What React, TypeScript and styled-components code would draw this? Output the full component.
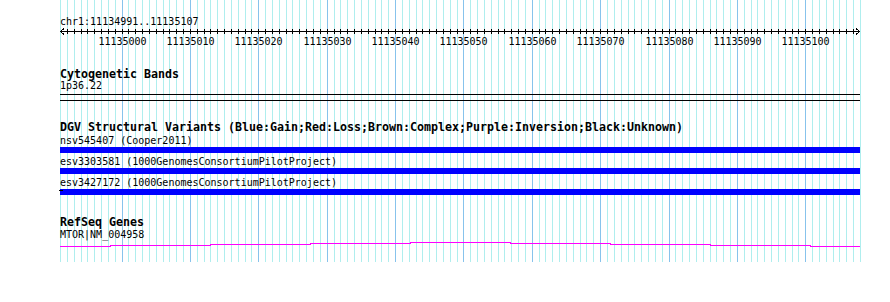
import styled, { createGlobalStyle } from "styled-components";

const START = 11134991;
const END = 11135107;
const SPAN = END - START + 1;
const TRACK_W = 800;
const LEFT = 60;
const bp = TRACK_W / SPAN;
const px = (i: number) => Math.round(i * bp);

const ticks = Array.from({ length: SPAN + 1 }, (_, i) => i);
const majors = ticks.filter((i) => (START + i) % 10 === 0);

const variants = [
  { id: "nsv545407", study: "Cooper2011" },
  { id: "esv3303581", study: "1000GenomesConsortiumPilotProject" },
  { id: "esv3427172", study: "1000GenomesConsortiumPilotProject", mark: true },
];

// exon/intron steps of the gene model: [start px, end px, row]
const geneSteps: [number, number, number][] = [
  [0, 50, 5],
  [50, 150, 4],
  [150, 250, 3],
  [250, 350, 2],
  [350, 450, 1],
  [450, 550, 2],
  [550, 650, 3],
  [650, 750, 4],
  [750, 800, 5],
];

function App() {
  return (
    <Page>
      <GlobalStyle />
      <GridLayer width={890} height={262}>
        {ticks.map((i) => {
          const major = (START + i) % 10 === 0;
          const x = LEFT + px(i) + 0.5;
          return (
            <line
              key={i}
              x1={x}
              x2={x}
              y1={0}
              y2={262}
              stroke={major ? "#87c3ec" : "#afeeee"}
              strokeWidth={1}
            />
          );
        })}
      </GridLayer>

      <Panel>
        <ChrLabel>chr1:11134991..11135107</ChrLabel>
        <RulerSvg width={801} height={20}>
          <line x1={0} x2={800} y1={3.5} y2={3.5} stroke="#000" />
          <polyline points="4,0.5 0.5,3.5 4,6.5" fill="none" stroke="#000" />
          <polyline points="796,0.5 799.5,3.5 796,6.5" fill="none" stroke="#000" />
          {ticks.slice(1, -1).map((i) => (
            <line
              key={i}
              x1={px(i) + 0.5}
              x2={px(i) + 0.5}
              y1={1}
              y2={6}
              stroke="#000"
            />
          ))}
          {majors.map((i) => (
            <TickText key={i} x={px(i) + 0.5} y={17} textAnchor="middle">
              {START + i}
            </TickText>
          ))}
        </RulerSvg>

        <Track $gap={20}>
          <TrackTitle>Cytogenetic Bands</TrackTitle>
          <FeatureLabel>1p36.22</FeatureLabel>
          <BandLines />
        </Track>

        <Track $gap={20}>
          <TrackTitle>
            DGV Structural Variants
            (Blue:Gain;Red:Loss;Brown:Complex;Purple:Inversion;Black:Unknown)
          </TrackTitle>
          <VariantList>
            {variants.map((v) => (
              <FeatureRow key={v.id}>
                <FeatureLabel>
                  {v.id} ({v.study})
                </FeatureLabel>
                <Bar $mark={!!v.mark} />
              </FeatureRow>
            ))}
          </VariantList>
        </Track>

        <Track $gap={21}>
          <TrackTitle>RefSeq Genes</TrackTitle>
          <GeneLabel>MTOR|NM_004958</GeneLabel>
          <GeneSvg width={800} height={8}>
            <polyline
              fill="none"
              stroke="#ff00ff"
              strokeWidth={1}
              points={geneSteps
                .map(([a, b, r]) => `${a},${r + 0.5} ${b},${r + 0.5}`)
                .join(" ")}
            />
          </GeneSvg>
        </Track>
      </Panel>
    </Page>
  );
}

export default App;

const GlobalStyle = createGlobalStyle`
  html, body {
    margin: 0;
    padding: 0;
    background: #ffffff;
    font-family: "DejaVu Sans Mono", "Liberation Mono", monospace;
  }
  * {
    box-sizing: border-box;
  }
`;

const Page = styled.div`
  position: relative;
  width: 890px;
  height: 302px;
  overflow: hidden;
  background: #ffffff;
  color: #000000;
`;

const GridLayer = styled.svg`
  position: absolute;
  top: 0;
  left: 0;
  shape-rendering: crispEdges;
`;

const Panel = styled.div`
  position: relative;
  display: flex;
  flex-direction: column;
  width: ${TRACK_W + LEFT}px;
  padding-left: ${LEFT}px;
  padding-top: 16px;
`;

const ChrLabel = styled.div`
  font-size: 10px;
  line-height: 12px;
  height: 12px;
  white-space: nowrap;
`;

const RulerSvg = styled.svg`
  display: block;
  overflow: visible;
  shape-rendering: crispEdges;
`;

const TickText = styled.text`
  font-family: "DejaVu Sans Mono", monospace;
  font-size: 10px;
  fill: #000000;
`;

const Track = styled.section<{ $gap: number }>`
  display: flex;
  flex-direction: column;
  margin-top: ${(p) => p.$gap}px;
`;

const TrackTitle = styled.div`
  font-size: 11.63px;
  font-weight: 700;
  line-height: 12px;
  height: 12px;
  white-space: nowrap;
`;

const FeatureLabel = styled.div`
  font-size: 10px;
  line-height: 12px;
  height: 12px;
  white-space: nowrap;
`;

const GeneLabel = styled(FeatureLabel)`
  margin-top: 1px;
`;

const BandLines = styled.div`
  margin-top: 2px;
  width: ${TRACK_W}px;
  height: 7px;
  border-top: 1px solid #000000;
  border-bottom: 1px solid #000000;
`;

const VariantList = styled.div`
  display: flex;
  flex-direction: column;
  gap: 3px;
  margin-top: 2px;
`;

const FeatureRow = styled.div`
  display: flex;
  flex-direction: column;
`;

const Bar = styled.div<{ $mark: boolean }>`
  position: relative;
  width: ${TRACK_W}px;
  height: 6px;
  background: #0000ff;
  &::before {
    content: "";
    display: ${(p) => (p.$mark ? "block" : "none")};
    position: absolute;
    left: -1px;
    top: 1px;
    width: 4px;
    height: 1px;
    background: #000000;
  }
`;

const GeneSvg = styled.svg`
  display: block;
  shape-rendering: crispEdges;
`;
